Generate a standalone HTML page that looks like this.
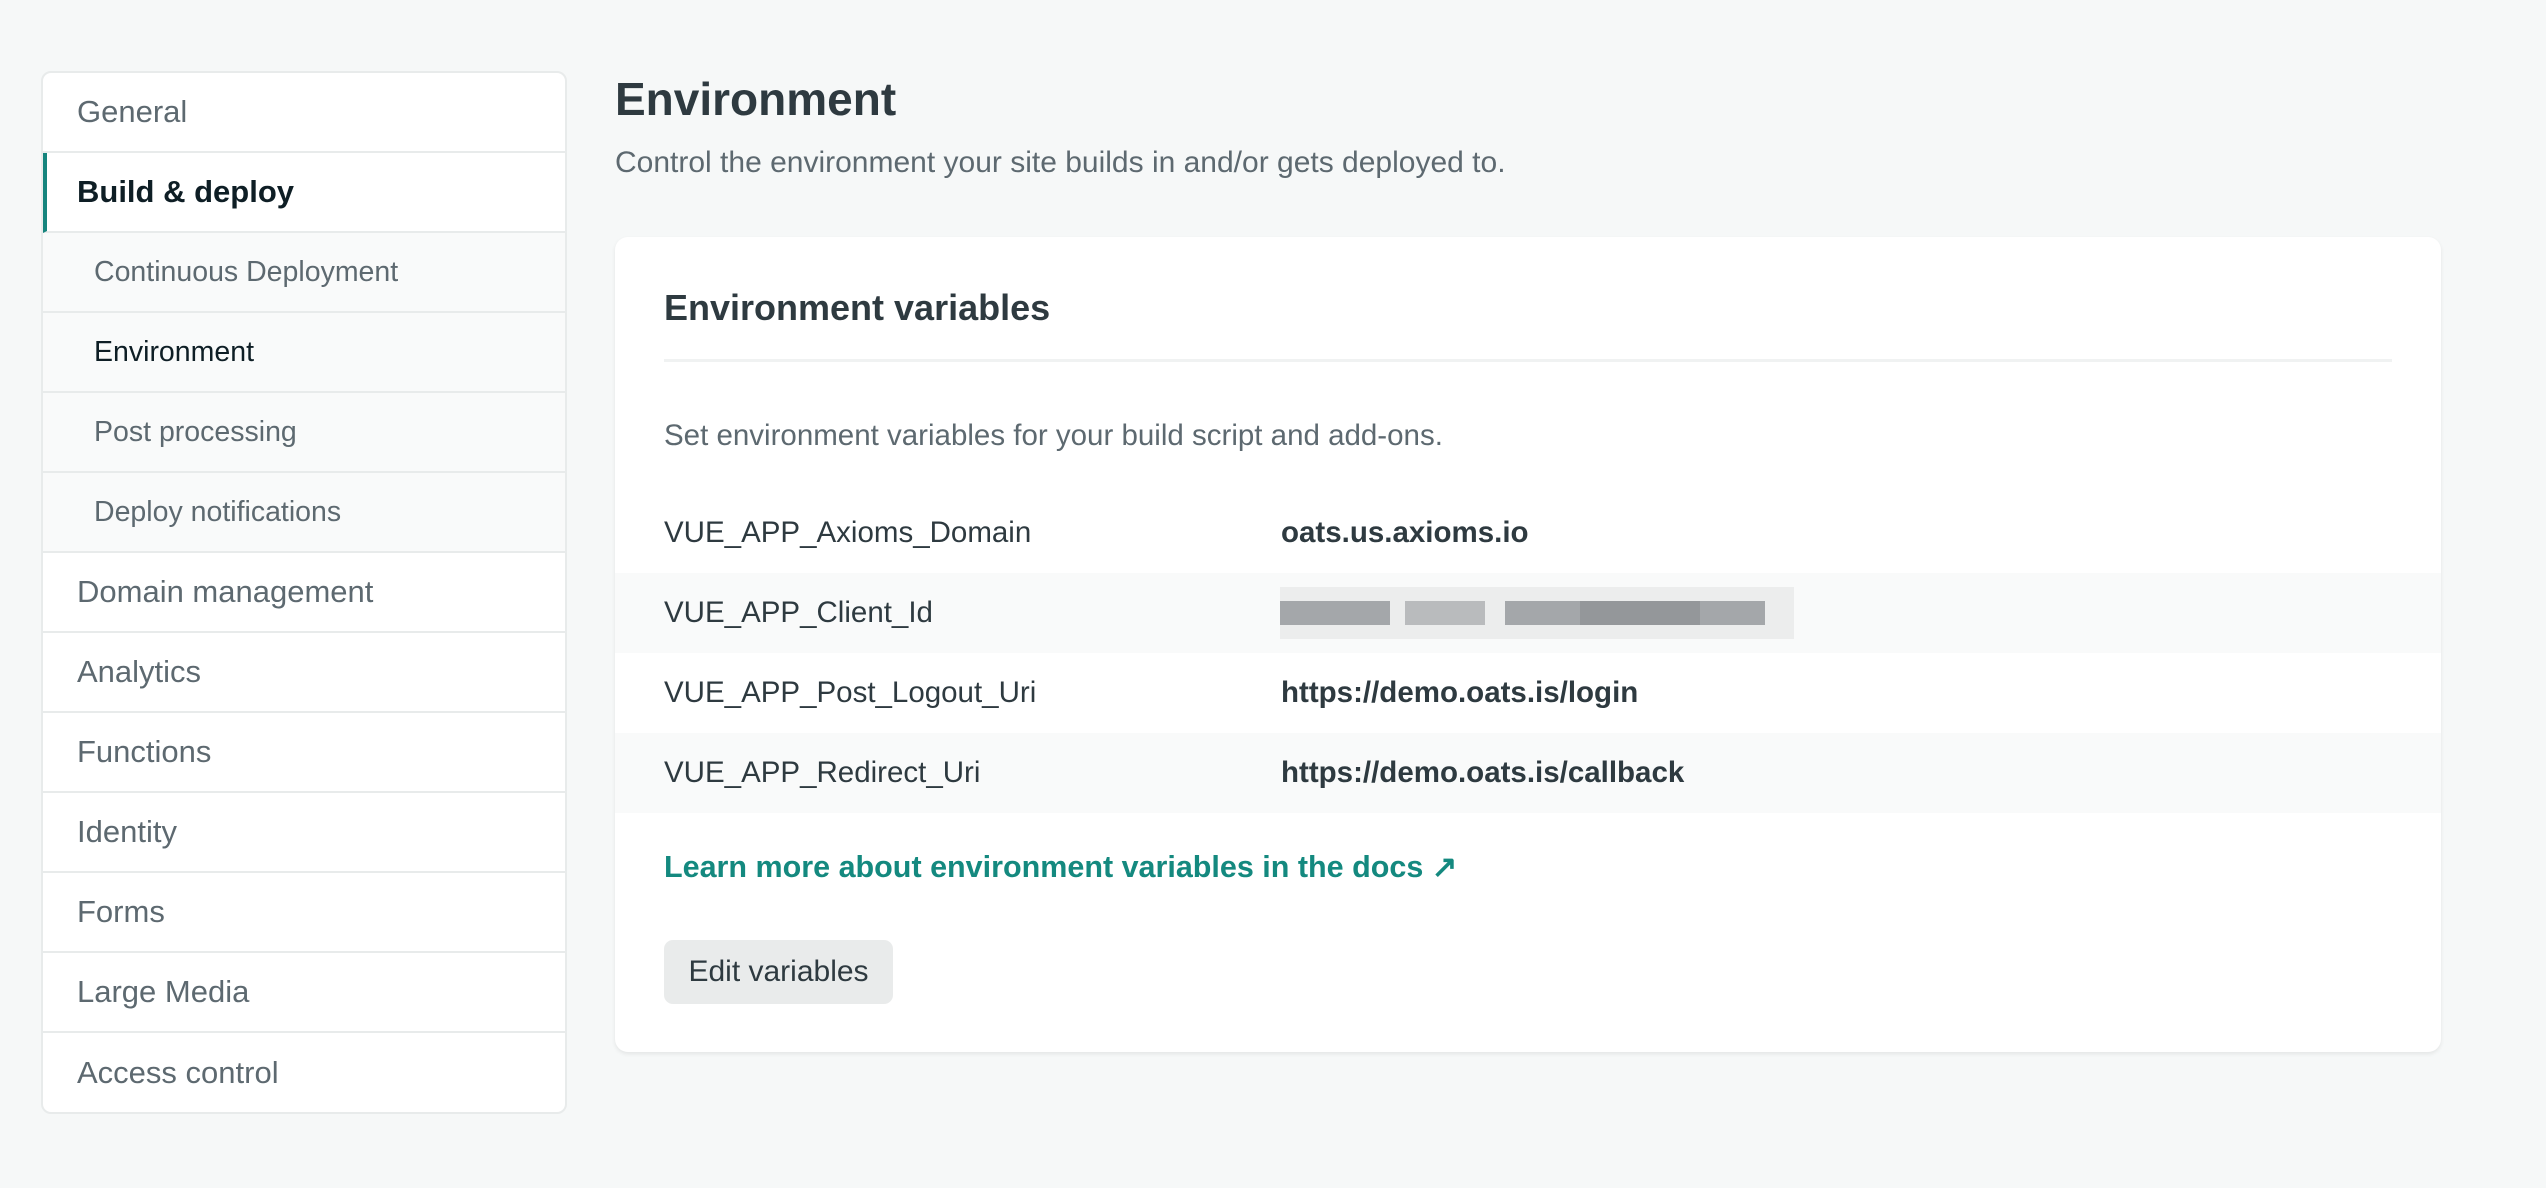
<!DOCTYPE html>
<html><head><meta charset="utf-8"><style>
*{box-sizing:border-box;margin:0;padding:0}
body{width:2546px;height:1188px;background:#f6f8f8;font-family:"Liberation Sans",sans-serif;position:relative;overflow:hidden;color:#2e3a40}
.side{position:absolute;left:41px;top:71px;width:526px;height:1043px;background:#fff;border:2px solid #e8ebeb;border-radius:10px;overflow:hidden}
.it{height:80px;border-bottom:2px solid #e8ebeb;display:flex;align-items:center;padding-left:34px;font-size:31px;color:#5d6970}
.it:last-child{border-bottom:none}
.it.act{font-weight:bold;color:#0e1e25;border-left:4px solid #15847d;padding-left:30px}
.it.sub{background:#f9fafa;padding-left:51px;font-size:28.5px}
.it.sub.cur{color:#0e1e25}
h1{position:absolute;left:615px;top:72px;font-size:46px;font-weight:bold;color:#2e3a40}
.subt{position:absolute;left:615px;top:146px;font-size:30px;color:#5d6970}
.card{position:absolute;left:615px;top:237px;width:1826px;height:815px;background:#fff;border-radius:13px;box-shadow:0 2px 4px rgba(0,0,0,.08)}
.ct{position:absolute;left:49px;top:50px;font-size:36px;font-weight:bold;color:#2e3a40}
.div{position:absolute;left:49px;right:49px;top:122px;height:3px;background:#f0f2f2}
.desc{position:absolute;left:49px;top:182px;font-size:29.5px;color:#5d6970}
.row{position:absolute;left:0;right:0;height:80px;display:flex;align-items:center;font-size:29.5px}
.row.g{background:#f9fafa}
.k{position:absolute;left:49px;color:#2e3a40}
.v{position:absolute;left:666px;font-weight:bold;color:#2e3a40}
.link{position:absolute;left:49px;top:613px;font-size:30.5px;font-weight:bold;color:#14897f}
.btn{position:absolute;left:49px;top:703px;width:229px;height:64px;background:#e9ebeb;border-radius:9px;font-size:30px;color:#2e3a40;display:flex;align-items:center;justify-content:center}
.blur{position:absolute;left:665px;top:14px;width:514px;height:52px;background:#eceded}
.blur i{position:absolute;top:14px;height:24px;background:#a4a7aa}
</style></head><body>
<div class="side">
<div class="it">General</div>
<div class="it act">Build &amp; deploy</div>
<div class="it sub">Continuous Deployment</div>
<div class="it sub cur">Environment</div>
<div class="it sub">Post processing</div>
<div class="it sub">Deploy notifications</div>
<div class="it">Domain management</div>
<div class="it">Analytics</div>
<div class="it">Functions</div>
<div class="it">Identity</div>
<div class="it">Forms</div>
<div class="it">Large Media</div>
<div class="it">Access control</div>
</div>
<h1>Environment</h1>
<div class="subt">Control the environment your site builds in and/or gets deployed to.</div>
<div class="card">
<div class="ct">Environment variables</div>
<div class="div"></div>
<div class="desc">Set environment variables for your build script and add-ons.</div>
<div class="row" style="top:256px"><span class="k">VUE_APP_Axioms_Domain</span><span class="v">oats.us.axioms.io</span></div>
<div class="row g" style="top:336px"><span class="k">VUE_APP_Client_Id</span>
<div class="blur"><i style="left:0;width:110px"></i><i style="left:125px;width:80px;background:#b9bbbd"></i><i style="left:225px;width:260px"></i><i style="left:300px;width:120px;background:#94979a"></i></div></div>
<div class="row" style="top:416px"><span class="k">VUE_APP_Post_Logout_Uri</span><span class="v">https://demo.oats.is/login</span></div>
<div class="row g" style="top:496px"><span class="k">VUE_APP_Redirect_Uri</span><span class="v">https://demo.oats.is/callback</span></div>
<div class="link">Learn more about environment variables in the docs ↗</div>
<div class="btn">Edit variables</div>
</div>
</body></html>
